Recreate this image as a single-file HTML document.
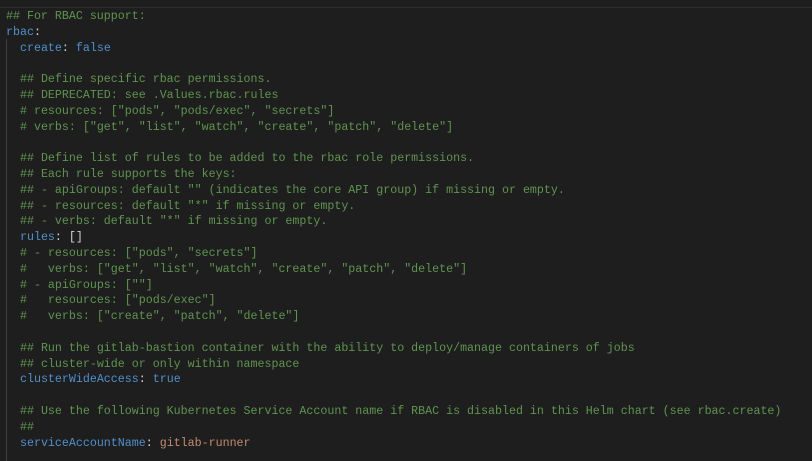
<!DOCTYPE html>
<html><head><style>
html,body{margin:0;padding:0;background:#1e1e1e;width:812px;height:461px;overflow:hidden}
.top{position:absolute;left:0;top:0;width:812px;height:7px;background:#1e1e1e;border-bottom:1px solid #2d2d2d}
.guide{position:absolute;left:6px;top:39px;width:1px;height:422px;background:#404040}
pre{position:absolute;left:6px;top:9px;margin:0;font-family:"Liberation Mono",monospace;font-size:11.65px;line-height:15.8px;color:#d4d4d4}
.c{color:#5f9450}.k{color:#4f8fcc}.s{color:#c48a70}.b{color:#4f8fcc}
</style></head><body>
<div class="top"></div><div class="guide"></div>
<pre><span class="c">## For RBAC support:</span>
<span class="k">rbac</span>:
  <span class="k">create</span>: <span class="b">false</span>

  <span class="c">## Define specific rbac permissions.</span>
  <span class="c">## DEPRECATED: see .Values.rbac.rules</span>
  <span class="c"># resources: ["pods", "pods/exec", "secrets"]</span>
  <span class="c"># verbs: ["get", "list", "watch", "create", "patch", "delete"]</span>

  <span class="c">## Define list of rules to be added to the rbac role permissions.</span>
  <span class="c">## Each rule supports the keys:</span>
  <span class="c">## - apiGroups: default "" (indicates the core API group) if missing or empty.</span>
  <span class="c">## - resources: default "*" if missing or empty.</span>
  <span class="c">## - verbs: default "*" if missing or empty.</span>
  <span class="k">rules</span>: []
  <span class="c"># - resources: ["pods", "secrets"]</span>
  <span class="c">#   verbs: ["get", "list", "watch", "create", "patch", "delete"]</span>
  <span class="c"># - apiGroups: [""]</span>
  <span class="c">#   resources: ["pods/exec"]</span>
  <span class="c">#   verbs: ["create", "patch", "delete"]</span>

  <span class="c">## Run the gitlab-bastion container with the ability to deploy/manage containers of jobs</span>
  <span class="c">## cluster-wide or only within namespace</span>
  <span class="k">clusterWideAccess</span>: <span class="b">true</span>

  <span class="c">## Use the following Kubernetes Service Account name if RBAC is disabled in this Helm chart (see rbac.create)</span>
  <span class="c">##</span>
  <span class="k">serviceAccountName</span>: <span class="s">gitlab-runner</span></pre>
</body></html>
